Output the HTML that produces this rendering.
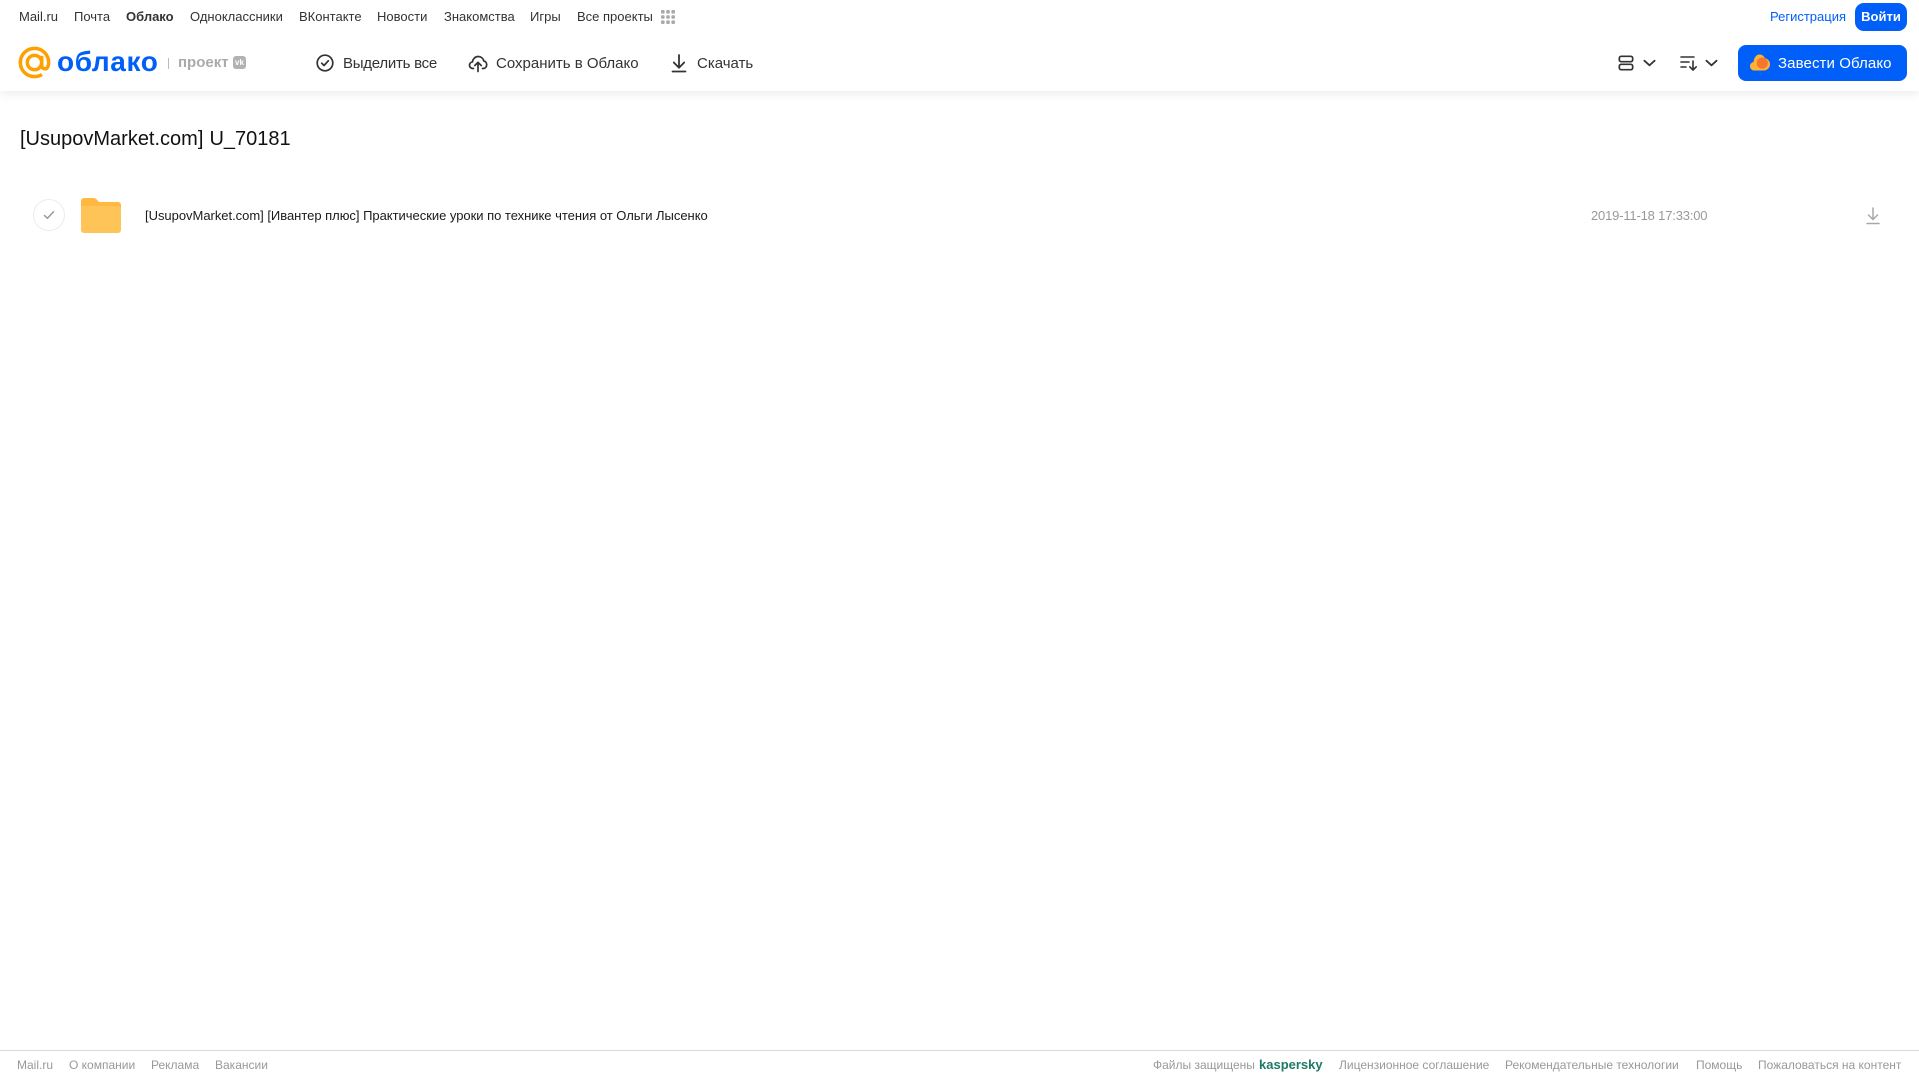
<!DOCTYPE html>
<html lang="ru"><head><meta charset="utf-8"><title>Облако</title>
<style>
html,body{margin:0;padding:0;background:#fff}
body{position:relative;width:1919px;height:1079px;overflow:hidden;font-family:"Liberation Sans",sans-serif}
.t{position:absolute;white-space:nowrap;line-height:20px}
.n{top:7px;font-size:13px;color:#333}
.b{top:53.500px;font-size:15px;color:#333}
.f{top:1055px;font-size:12px;color:#999}
svg{position:absolute}
</style></head><body>
<div style="position:absolute;left:0;top:0;width:1919px;height:91px;background:#fff;box-shadow:0 2px 10px rgba(0,0,0,.09)"></div>
<span class="t n" style="left:19px">Mail.ru</span>
<span class="t n" style="left:74px">Почта</span>
<span class="t n" style="left:126px;font-weight:bold">Облако</span>
<span class="t n" style="left:190px">Одноклассники</span>
<span class="t n" style="left:299px">ВКонтакте</span>
<span class="t n" style="left:377px">Новости</span>
<span class="t n" style="left:444px">Знакомства</span>
<span class="t n" style="left:530px">Игры</span>
<span class="t n" style="left:577px">Все проекты</span>
<svg style="left:661px;top:10px" width="14" height="14" fill="#aaa"><rect x="0" y="0" width="3.6" height="3.6" rx="1"/><rect x="5.2" y="0" width="3.6" height="3.6" rx="1"/><rect x="10.4" y="0" width="3.6" height="3.6" rx="1"/><rect x="0" y="5.2" width="3.6" height="3.6" rx="1"/><rect x="5.2" y="5.2" width="3.6" height="3.6" rx="1"/><rect x="10.4" y="5.2" width="3.6" height="3.6" rx="1"/><rect x="0" y="10.4" width="3.6" height="3.6" rx="1"/><rect x="5.2" y="10.4" width="3.6" height="3.6" rx="1"/><rect x="10.4" y="10.4" width="3.6" height="3.6" rx="1"/></svg>
<span class="t n" style="left:1770px;color:#005ff9">Регистрация</span>
<div class="t" style="left:1855px;top:3px;width:52px;height:28px;line-height:27px;background:#005ff9;border-radius:9px;color:#fff;font-size:13px;font-weight:bold;text-align:center">Войти</div>

<!-- logo -->
<svg style="left:18px;top:46px" width="33" height="33" viewBox="0 0 34 34" fill="none" stroke="#ffa000" stroke-width="3.6"><circle cx="17" cy="17" r="7.4"/><path d="M24.4 10v9.500c0 2.600 1.600 4 3.400 4 2.300 0 3.800-2.600 3.800-6.500C31.600 8.900 25.100 2.400 17 2.400S2.400 8.900 2.400 17 8.900 31.600 17 31.600c2.900 0 5.500-.8 7.700-2.200"/></svg>
<span class="t" style="left:57px;top:46px;font-size:28px;line-height:32px;font-weight:bold;color:#005ff9;letter-spacing:.6px">облако</span>
<div style="position:absolute;left:168px;top:58px;width:1px;height:11px;background:#bbb"></div>
<span class="t" style="left:178px;top:53px;font-size:15px;font-weight:bold;color:#aaa">проект</span>
<div class="t" style="left:233px;top:56px;width:13px;height:13px;background:#b2b2b2;border-radius:3px;color:#fff;font-size:8px;line-height:13px;font-weight:bold;text-align:center">vk</div>

<!-- toolbar -->
<svg style="left:315px;top:53px" width="20" height="20" viewBox="0 0 20 20" fill="none" stroke="#333" stroke-width="1.7"><circle cx="10" cy="10" r="7.8"/><path d="M6.700 10.200l2.300 2.300 4.300-4.700" stroke-linecap="round" stroke-linejoin="round"/></svg>
<span class="t b" style="left:343px;letter-spacing:-.25px">Выделить все</span>
<svg style="left:468px;top:53px" width="20" height="20" viewBox="0 0 20 20" fill="none" stroke="#333" stroke-width="1.7" stroke-linecap="round" stroke-linejoin="round"><path d="M5.500 15.500H4.800C2.900 15.500 1.500 14 1.500 12.200c0-1.700 1.200-3 2.900-3.300C4.800 6 7.100 3.500 10.200 3.500c2.800 0 5 1.800 5.600 4.500 1.700.3 2.900 1.900 2.900 3.800 0 2-1.500 3.700-3.500 3.700h-.7"/><path d="M10 18.500V9.500M6.800 12.500L10 9.300l3.200 3.200"/></svg>
<span class="t b" style="left:496px">Сохранить в Облако</span>
<svg style="left:670px;top:53px" width="18" height="20" viewBox="0 0 18 20" fill="none" stroke="#333" stroke-width="1.8" stroke-linecap="round" stroke-linejoin="round"><path d="M9 2v12.500M3.800 9.500L9 14.700l5.200-5.200M2.500 18.500h13"/></svg>
<span class="t b" style="left:697px">Скачать</span>

<svg style="left:1618px;top:55px" width="16" height="16" viewBox="0 0 18 18" fill="none" stroke="#333" stroke-width="1.900"><rect x="1.500" y="1.500" width="15" height="6" rx="2"/><rect x="1.500" y="10.500" width="15" height="6" rx="2"/></svg>
<svg style="left:1643px;top:59px" width="13" height="8" viewBox="0 0 14 8" fill="none" stroke="#333" stroke-width="1.900" stroke-linecap="round" stroke-linejoin="round"><path d="M1.500 1.500L7 6.500l5.500-5"/></svg>
<svg style="left:1680px;top:55px" width="18" height="16" viewBox="0 0 18 16" fill="none" stroke="#333" stroke-width="1.600" stroke-linecap="round" stroke-linejoin="round"><path d="M1 2h13M1 7h8M1 12h5M13 6v9M9.800 11.800L13 15l3.200-3.200"/></svg>
<svg style="left:1705px;top:59px" width="13" height="8" viewBox="0 0 14 8" fill="none" stroke="#333" stroke-width="1.900" stroke-linecap="round" stroke-linejoin="round"><path d="M1.500 1.500L7 6.500l5.500-5"/></svg>

<div style="position:absolute;left:1738px;top:45px;width:169px;height:36px;background:#005ff9;border-radius:8px"></div>
<svg style="left:1750px;top:54px" width="20" height="17" viewBox="0 0 20 17"><path d="M4.500 16.500C2 16.500 0 14.600 0 12.200c0-2.100 1.500-3.800 3.500-4.200C4 3.500 6.500.5 9.500.5c2.500 0 4.500 1.500 5.400 3.800 2.800.4 5.100 2.800 5.100 6 0 3.500-2.800 6.200-6.200 6.200z" fill="#ffb236"/><circle cx="12.300" cy="9.200" r="5.600" fill="#f5762d"/></svg>
<span class="t" style="left:1778px;top:53.500px;font-size:15px;color:#fff;letter-spacing:.1px">Завести Облако</span>

<span class="t" style="left:20px;top:127px;font-size:20px;line-height:24px;color:#111;word-spacing:.5px;letter-spacing:0">[UsupovMarket.com] U_70181</span>

<!-- row -->
<div style="position:absolute;left:33px;top:199px;width:30px;height:30px;border:1px solid #ececec;border-radius:50%"></div>
<svg style="left:43px;top:210px" width="12" height="10" viewBox="0 0 12 10" fill="none" stroke="#999" stroke-width="1.500" stroke-linecap="round" stroke-linejoin="round"><path d="M1.500 5.500l3 2.800 6-6.500"/></svg>
<svg style="left:81px;top:198px" width="40" height="35" viewBox="0 0 40 35"><path d="M0 3a3 3 0 0 1 3-3h9c2 0 3 .8 4 1.800L18 4h19a3 3 0 0 1 3 3v3H0z" fill="#ffb840"/><path d="M0 8h37a3 3 0 0 1 3 3V32a3 3 0 0 1-3 3H3a3 3 0 0 1-3-3z" fill="#ffc457"/></svg>
<span class="t" style="left:145px;top:206px;font-size:13px;color:#1a1a1a;letter-spacing:-.025px">[UsupovMarket.com] [Ивантер плюс] Практические уроки по технике чтения от Ольги Лысенко</span>
<span class="t" style="left:1591px;top:206px;font-size:13px;color:#999;letter-spacing:-.18px">2019-11-18 17:33:00</span>
<svg style="left:1865px;top:206px" width="16" height="19" viewBox="0 0 16 19" fill="none" stroke="#a8a8a8" stroke-width="1.500" stroke-linecap="round" stroke-linejoin="round"><path d="M8 2v11.500M3.500 9L8 13.500 12.500 9M2 17.500h12"/></svg>

<!-- footer -->
<div style="position:absolute;left:0;top:1050px;width:1919px;height:1px;background:#d9d9d9"></div>
<span class="t f" style="left:17px">Mail.ru</span>
<span class="t f" style="left:69px">О компании</span>
<span class="t f" style="left:151px">Реклама</span>
<span class="t f" style="left:215px">Вакансии</span>
<span class="t f" style="left:1153px">Файлы защищены</span>
<span class="t f" style="left:1259px;font-size:13px;font-weight:bold;color:#1d7a65">kaspersky</span>
<span class="t f" style="left:1339px">Лицензионное соглашение</span>
<span class="t f" style="left:1505px">Рекомендательные технологии</span>
<span class="t f" style="left:1696px">Помощь</span>
<span class="t f" style="left:1758px">Пожаловаться на контент</span>
</body></html>
